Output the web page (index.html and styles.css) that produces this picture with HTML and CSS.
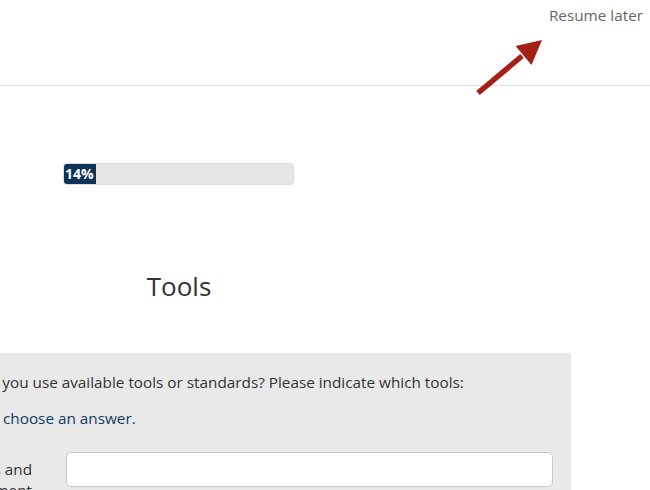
FILE: index.html
```html
<!DOCTYPE html>
<html lang="en">
<head>
<meta charset="utf-8">
<title>Survey – Tools</title>
<link rel="stylesheet" href="styles.css">
</head>
<body>
<header class="topbar">
  <a class="resume" href="#">Resume later</a>
</header>
<svg class="pointer" width="80" height="70" viewBox="0 0 80 70" aria-hidden="true">
  <line x1="8" y1="63" x2="52" y2="26" stroke="#a51f17" stroke-width="5.5"/>
  <polygon points="72,10 45.5,16 61.5,35" fill="#a51f17"/>
</svg>
<main class="survey">
  <div class="progress">
    <div class="progress-fill" style="width:14%">14%</div>
  </div>
  <h1 class="group-title">Tools</h1>
  <section class="question">
    <p class="question-text">Do you use available tools or standards? Please indicate which tools:</p>
    <p class="question-help">Please choose an answer.</p>
    <div class="answer-row">
      <label class="answer-label" for="a1">Requirements and management</label>
      <input class="answer-input" id="a1" type="text">
    </div>
  </section>
</main>
</body>
</html>
```

FILE: styles.css
```css
* {
  box-sizing: border-box;
}

html, body {
  margin: 0;
  padding: 0;
  overflow: hidden;
}

body {
  font-family: "Open Sans", "DejaVu Sans", sans-serif;
  color: #333;
  background: #fff;
  width: 650px;
  height: 490px;
  position: relative;
}

.topbar {
  height: 86px;
  border-bottom: 1px solid #e2e2e2;
  display: flex;
  justify-content: flex-end;
  align-items: flex-start;
  padding: 5px 7px 0 0;
}

.resume {
  font-size: 15.3px;
  color: #666;
  text-decoration: none;
  line-height: 20px;
}

.pointer {
  position: absolute;
  left: 470px;
  top: 30px;
}

.survey {
  margin-left: -213px;
  width: 784px;
  padding-top: 77px;
}

.progress {
  margin-left: 276px;
  width: 231px;
  height: 22px;
  background: #e6e6e6;
  border: 1px solid #dcdcdc;
  border-radius: 4px;
  overflow: hidden;
}

.progress-fill {
  height: 100%;
  background: #0d3358;
  color: #fff;
  font-size: 14px;
  font-weight: 700;
  line-height: 20px;
  padding-left: 1px;
  white-space: nowrap;
}

.group-title {
  margin: 83px 0 0;
  font-size: 26px;
  font-weight: 400;
  line-height: 36px;
  text-align: center;
  color: #333;
}

.question {
  margin-top: 49px;
  background: #e9e9e9;
  padding: 18px 18px 20px 0;
}

.question-text {
  margin: 0 0 0 191px;
  font-size: 15.3px;
  line-height: 22px;
}

.question-help {
  margin: 14px 0 0 166px;
  font-size: 15.3px;
  line-height: 22px;
  color: #0e3d63;
}

.answer-row {
  margin-top: 23px;
  padding-left: 105px;
  display: grid;
  grid-template-columns: 140px 1fr;
  column-gap: 34px;
  align-items: start;
}

.answer-label {
  font-size: 15.3px;
  line-height: 21px;
  text-align: right;
  padding-top: 7px;
}

.answer-input {
  height: 35px;
  border: 1px solid #c9c9c9;
  border-radius: 5px;
  background: #fff;
  font: inherit;
}
```
